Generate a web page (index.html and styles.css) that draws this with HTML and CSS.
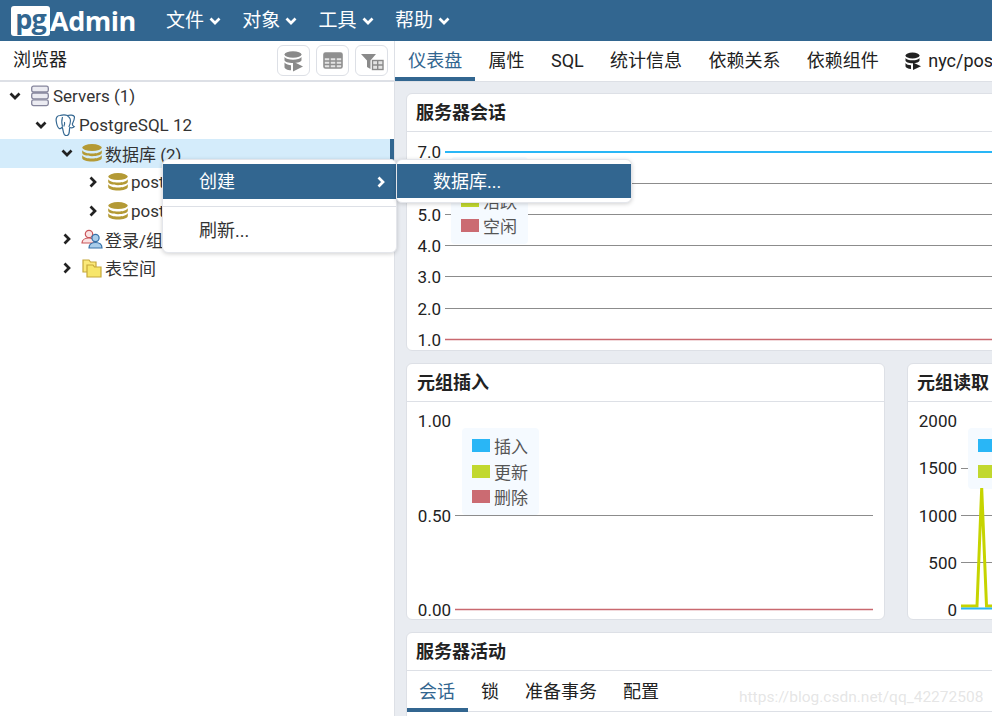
FILE: index.html
```html
<!DOCTYPE html>
<html lang="zh">
<head>
<meta charset="utf-8">
<title>pgAdmin</title>
<link rel="stylesheet" href="styles.css">
</head>
<body>
<svg class="defs" width="0" height="0">
  <defs>
    <symbol id="db" viewBox="0 0 20 18">
      <ellipse cx="10" cy="3.600" rx="9.800" ry="3.500" fill="#b49a35"/>
      <path d="M.2 6.300c1.500 2.400 5.300 3.300 9.800 3.300s8.300-.9 9.800-3.300v2.500c0 2-4.500 3.400-9.800 3.400S.2 10.800.2 8.800z" fill="#b49a35"/>
      <path d="M.2 11.300c1.500 2.400 5.300 3.300 9.800 3.300s8.300-.9 9.800-3.300v2.700c0 2-4.500 3.500-9.800 3.500S.2 16 .2 14z" fill="#b49a35"/>
    </symbol>
    <symbol id="down" viewBox="0 0 12 10"><path d="M1.500 2.500 6 7l4.500-4.500" fill="none" stroke="currentColor" stroke-width="2.700"/></symbol>
    <symbol id="right" viewBox="0 0 10 12"><path d="M2.500 1.500 7 6l-4.500 4.500" fill="none" stroke="currentColor" stroke-width="2.700"/></symbol>
  </defs>
</svg>
<div class="app">
  <header class="topbar">
    <div class="logo"><span class="logo-pg">pg</span><span class="logo-admin">Admin</span></div>
    <nav class="menu">
      <span class="menu-item">文件<svg class="menu-chev"><use href="#down"/></svg></span>
      <span class="menu-item">对象<svg class="menu-chev"><use href="#down"/></svg></span>
      <span class="menu-item">工具<svg class="menu-chev"><use href="#down"/></svg></span>
      <span class="menu-item">帮助<svg class="menu-chev"><use href="#down"/></svg></span>
    </nav>
  </header>
  <div class="main">
    <aside class="sidebar">
      <div class="side-head">
        <span class="side-title">浏览器</span>
        <div class="tools">
          <button class="tool" type="button">
            <svg width="22" height="22" viewBox="0 0 22 22">
              <ellipse cx="10" cy="4.500" rx="8.500" ry="3.300" fill="#8a8a8a"/>
              <path d="M1.500 7c1.500 2 4.500 2.700 8.500 2.700S17 9 18.500 7v3c0 1.800-3.800 3-8.500 3s-8.500-1.200-8.500-3zM1.500 12.500c1.500 2 4.500 2.700 6.500 2.700v5c-3.700-.2-6.500-1.400-6.500-3z" fill="#8a8a8a"/>
              <path d="M10 11.500l10 5-10 5z" fill="#8a8a8a"/>
            </svg>
          </button>
          <button class="tool" type="button">
            <svg width="20" height="18" viewBox="0 0 20 18">
              <rect x="1" y="1" width="18" height="15" rx="1.500" fill="#e4e4e4" stroke="#8f8f8f" stroke-width="1.600"/>
              <path d="M1 5.500h18M1 9h18M1 12.500h18M7 4v12M13 4v12" stroke="#8f8f8f" stroke-width="1.500"/>
              <rect x="1" y="1" width="18" height="4" fill="#8f8f8f"/>
            </svg>
          </button>
          <button class="tool" type="button">
            <svg width="24" height="20" viewBox="0 0 24 20">
              <path d="M1 3h15l-5.500 6.500V18L7 16V9.500z" fill="#8a8a8a"/>
              <rect x="12.500" y="9.500" width="10.500" height="9" fill="#e4e4e4" stroke="#8a8a8a" stroke-width="1.400"/>
              <path d="M12.500 14h10.500M17.700 9.500v9" stroke="#8a8a8a" stroke-width="1.400"/>
            </svg>
          </button>
        </div>
      </div>
      <div class="tree">
        <div class="row l0">
          <svg class="chev"><use href="#down"/></svg>
          <svg class="icon icon-server" viewBox="0 0 20 22">
            <g fill="#ececf2" stroke="#85859c" stroke-width="1.300">
              <rect x="1.700" y="1.200" width="16.600" height="5.800" rx="1.800"/>
              <rect x="1.700" y="8" width="16.600" height="5.800" rx="1.800"/>
              <rect x="1.700" y="14.800" width="16.600" height="5.800" rx="1.800"/>
            </g>
          </svg>
          <span>Servers (1)</span>
        </div>
        <div class="row l1">
          <svg class="chev"><use href="#down"/></svg>
          <svg class="icon icon-wide" viewBox="0 0 22 22">
            <path d="M5 1.500C2 1.500 .8 4 1.200 7c.4 2.800 1.500 6.500 3 7.500 1.200.8 2.200-.5 3-1.500.5 1.500 1 4 1.300 5.500.4 2 1.800 3.300 3.500 3 1.700-.3 2.200-2 2.300-4 .1-1.200.2-2.800.5-4 1.500.5 3.500.3 4.500-.8-1-.5-2-1.200-2-2.700 1-2 2.700-5 2-7.500C18.500 1 15 .7 12.500 1.500c-2.500-1-5-.8-7.500 0z" fill="#fff" stroke="#336791" stroke-width="1.200"/>
            <path d="M7.500 3c-.8 3-1.300 6 0 9.500M12.500 2c3 1.500 3.500 4.500 2.500 8-.3 1-1 1.800-1 3M9.500 8c.5 1.500 0 3-.7 4.500" fill="none" stroke="#336791" stroke-width="1.100"/>
          </svg>
          <span>PostgreSQL 12</span>
        </div>
        <div class="row l2 selected">
          <svg class="chev"><use href="#down"/></svg>
          <svg class="icon"><use href="#db"/></svg>
          <span>数据库 (2)</span>
        </div>
        <div class="row l3">
          <svg class="chev"><use href="#right"/></svg>
          <svg class="icon"><use href="#db"/></svg>
          <span>postgres</span>
        </div>
        <div class="row l3">
          <svg class="chev"><use href="#right"/></svg>
          <svg class="icon"><use href="#db"/></svg>
          <span>postgres</span>
        </div>
        <div class="row l2">
          <svg class="chev"><use href="#right"/></svg>
          <svg class="icon icon-wide" viewBox="0 0 22 20">
            <circle cx="8" cy="5" r="3.700" fill="#fbe3e3" stroke="#c9565b" stroke-width="1.200"/>
            <path d="M1 14c0-3 3-5 7-5 2 0 4 .6 5 2v3z" fill="#fbe3e3" stroke="#c9565b" stroke-width="1.200"/>
            <circle cx="14.500" cy="9" r="3.600" fill="#a9cdea" stroke="#3570a8" stroke-width="1.200"/>
            <path d="M8 19c0-3.500 2.500-5.500 6.500-5.500s6.500 2 6.500 5.500z" fill="#a9cdea" stroke="#3570a8" stroke-width="1.200"/>
          </svg>
          <span>登录/组角色</span>
        </div>
        <div class="row l2">
          <svg class="chev"><use href="#right"/></svg>
          <svg class="icon" viewBox="0 0 20 20">
            <path d="M1 2h6l1.500 2H14v10H1z" fill="#fbe97a" stroke="#c6a83a" stroke-width="1.200"/>
            <path d="M5 7h6l1.500 2H19v10H5z" fill="#f7e66a" stroke="#c6a83a" stroke-width="1.200"/>
          </svg>
          <span>表空间</span>
        </div>
      </div>
    </aside>
    <section class="content">
      <div class="tabs">
        <span class="tab active">仪表盘</span>
        <span class="tab">属性</span>
        <span class="tab">SQL</span>
        <span class="tab">统计信息</span>
        <span class="tab">依赖关系</span>
        <span class="tab">依赖组件</span>
        <span class="tab tab-query">
          <svg width="17" height="18" viewBox="0 0 17 18">
            <ellipse cx="7.500" cy="3.500" rx="7" ry="3" fill="#222"/>
            <path d="M.5 6c1 1.600 3.500 2.300 7 2.300s6-.7 7-2.300v2.500c0 1.600-3.100 2.700-7 2.700s-7-1.100-7-2.700zM.5 11c1 1.500 3 2.200 5.500 2.300V17C3 16.800.5 15.800.5 14.300z" fill="#222"/>
            <path d="M8 10.500l8 3.700-8 3.700z" fill="#222"/>
          </svg>nyc/postgres@PostgreSQL 12
        </span>
      </div>
      <div class="dash">
        <div class="panel panel-wide panel-sessions">
          <h3 class="panel-title">服务器会话</h3>
          <div class="panel-body">
            <svg class="chart chart-wide" viewBox="407 132 979 218">
              <g class="grid">
                <path d="M445 183.500H1387M445 214.500H1387M445 245.500H1387M445 276.500H1387M445 308.500H1387"/>
              </g>
              <path class="line-blue" d="M445 152H1387"/>
              <path class="line-red" d="M445 339.500H1387"/>
              <g class="axis">
                <text x="441" y="158">7.0</text>
                <text x="441" y="189">6.0</text>
                <text x="441" y="221">5.0</text>
                <text x="441" y="252">4.0</text>
                <text x="441" y="283">3.0</text>
                <text x="441" y="315">2.0</text>
                <text x="441" y="346">1.0</text>
              </g>
            </svg>
            <div class="legend legend-sessions">
              <div class="legend-row"><i class="swatch s-blue"></i>总计</div>
              <div class="legend-row"><i class="swatch s-lime"></i>活跃</div>
              <div class="legend-row"><i class="swatch s-red"></i>空闲</div>
            </div>
          </div>
        </div>
        <div class="panel panel-chart panel-left">
          <h3 class="panel-title">元组插入</h3>
          <div class="panel-body">
            <svg class="chart chart-half" viewBox="407 402 477 217">
              <path class="gridline" d="M455 515.500H873"/>
              <path class="line-red" d="M455 609.500H873"/>
              <g class="axis">
                <text x="451" y="427">1.00</text>
                <text x="451" y="522">0.50</text>
                <text x="451" y="616">0.00</text>
              </g>
            </svg>
            <div class="legend legend-insert">
              <div class="legend-row"><i class="swatch s-blue"></i>插入</div>
              <div class="legend-row"><i class="swatch s-lime"></i>更新</div>
              <div class="legend-row"><i class="swatch s-red"></i>删除</div>
            </div>
          </div>
        </div>
        <div class="panel panel-chart">
          <h3 class="panel-title">元组读取</h3>
          <div class="panel-body">
            <svg class="chart chart-half" viewBox="908 402 477 217">
              <path class="gridline" d="M961 468.500H1385M961 515.500H1385M961 562.500H1385"/>
              <g class="axis">
                <text x="957" y="427">2000</text>
                <text x="957" y="474">1500</text>
                <text x="957" y="522">1000</text>
                <text x="957" y="569">500</text>
                <text x="957" y="616">0</text>
              </g>
            </svg>
            <div class="legend legend-read">
              <div class="legend-row"><i class="swatch s-blue"></i>获取</div>
              <div class="legend-row"><i class="swatch s-lime"></i>返回</div>
            </div>
            <svg class="chart chart-half chart-over" viewBox="908 402 477 217">
              <path class="line-lime" d="M961 606H977L981.700 488L986.500 606H1385"/>
              <path class="line-blue" d="M961 608.500H1385"/>
            </svg>
          </div>
        </div>
        <div class="panel panel-wide panel-activity">
          <h3 class="panel-title">服务器活动</h3>
          <div class="subtabs">
            <span class="subtab active">会话</span>
            <span class="subtab">锁</span>
            <span class="subtab">准备事务</span>
            <span class="subtab">配置</span>
          </div>
        </div>
      </div>
    </section>
  </div>
  <div class="ctx ctx-main">
    <div class="ctx-item on">创建<svg class="ctx-chev"><use href="#right"/></svg></div>
    <div class="ctx-sep"></div>
    <div class="ctx-item">刷新...</div>
  </div>
  <div class="ctx ctx-sub">
    <div class="ctx-item on">数据库...</div>
  </div>
  <div class="watermark">https://blog.csdn.net/qq_42272508</div>
</div>
</body>
</html>
```
FILE: styles.css
```css
* { box-sizing: border-box; }
html, body { margin: 0; padding: 0; }
body {
  font-family: Roboto, "Noto Sans CJK SC", sans-serif;
  color: #222;
  background: #fff;
}
.defs { position: absolute; }
.app {
  position: relative;
  width: 992px;
  height: 716px;
  overflow: hidden;
  display: flex;
  flex-direction: column;
}

/* top bar */
.topbar {
  flex: none;
  height: 41px;
  background: #326690;
  display: flex;
  align-items: center;
  padding-left: 11px;
  color: #fff;
}
.logo {
  display: flex;
  align-items: center;
  width: 155px;
}
.logo-pg {
  width: 39px;
  height: 30px;
  background: #fff;
  color: #326690;
  border-radius: 3px;
  font: 700 27px/25px "Open Sans", sans-serif;
  letter-spacing: -1px;
  text-align: center;
}
.logo-admin {
  font: 700 27px/30px "Open Sans", sans-serif;
  letter-spacing: -.5px;
}
.menu { display: flex; gap: 10.300px; }
.menu-item {
  display: flex;
  align-items: center;
  font-size: 19px;
  line-height: 28px;
  width: 66px;
}
.menu-chev { width: 12px; height: 10px; margin-left: 5px; color: #fff; }

/* layout */
.main { flex: 1; display: flex; min-height: 0; }
.sidebar {
  flex: none;
  width: 395px;
  border-right: 1px solid #dde0e6;
}
.side-head {
  height: 41px;
  border-bottom: 2px solid #dde0e6;
  display: flex;
  align-items: center;
  justify-content: space-between;
  padding: 0 6px 0 13px;
}
.side-title { font-size: 18px; line-height: 24px; margin-bottom: 2px; }
.tools { display: flex; gap: 6px; }
.tool {
  width: 33px;
  height: 31px;
  padding: 0;
  border: 1px solid #dde0e6;
  border-radius: 6px;
  background: #fff;
  display: flex;
  align-items: center;
  justify-content: center;
}

/* tree */
.row {
  height: 28.600px;
  display: flex;
  align-items: center;
  font-size: 17px;
  color: #333;
  padding-left: 3px;
}
.row.l1 { padding-left: 29px; }
.row.l2 { padding-left: 55px; }
.row.l3 { padding-left: 81px; }
.row.selected { background: #d4ecfb; border-right: 4px solid #326690; }
.chev { width: 12px; height: 12px; margin: 0 6px; color: #222; flex: none; }
.icon { width: 20px; height: 20px; margin: 0 3px; flex: none; }
.icon-server { height: 22px; }
.icon-wide { width: 22px; height: 22px; margin: 0 2px; }

/* content */
.content {
  flex: none;
  width: 1000px;
  background: #e9ecf1;
  display: flex;
  flex-direction: column;
}
.tabs {
  flex: none;
  height: 41px;
  background: #fff;
  border-bottom: 1px solid #dde0e6;
  display: flex;
  white-space: nowrap;
}
.tab {
  font-size: 18px;
  line-height: 40px;
  padding: 0 13.200px;
  height: 40px;
}
.tab.active { color: #326690; border-bottom: 4px solid #326690; }
.tab-query { display: flex; align-items: center; gap: 6px; }
.dash {
  padding: 11px 0 0 11px;
  display: grid;
  grid-template-columns: 479px 479px;
  column-gap: 22px;
  row-gap: 12px;
  align-content: start;
}
.panel {
  background: #fff;
  border: 1px solid #dde0e6;
  border-radius: 6px;
  overflow: hidden;
}
.panel-wide { grid-column: 1 / 3; }
.panel-sessions { height: 258px; }
.panel-chart { height: 257px; }
.panel-activity { height: 100px; }
.panel-title {
  margin: 0;
  height: 38px;
  padding-left: 9px;
  font-size: 18px;
  line-height: 37px;
  font-weight: 700;
  color: #222;
  border-bottom: 1px solid #dde0e6;
}
.panel-left .panel-title { padding-left: 10px; }
.panel-body { position: relative; }
.chart { display: block; }
.chart-wide { width: 979px; height: 218px; }
.chart-half { width: 477px; height: 217px; }
.chart-over { position: absolute; left: 0; top: 0; }
.grid path, .gridline { stroke: #8c8c8c; stroke-width: 1; fill: none; }
.line-blue { stroke: #29b6f6; stroke-width: 2; fill: none; }
.line-red { stroke: #c9696f; stroke-width: 1.500; fill: none; }
.line-lime { stroke: #c6d400; stroke-width: 3; fill: none; }
.axis text { font-size: 17px; fill: #222; text-anchor: end; }

.legend {
  position: absolute;
  width: 77px;
  padding: 5px 0 5px 10px;
  background: #f5faff;
  border-radius: 4px;
  font-size: 17px;
  color: #555;
}
.legend-sessions { left: 44px; top: 25px; }
.legend-insert { left: 55px; top: 26px; }
.legend-read { left: 60px; top: 26px; }
.legend-row { height: 25.600px; display: flex; align-items: center; gap: 4px; white-space: nowrap; }
.swatch { width: 18px; height: 13px; flex: none; }
.s-blue { background: #29b6f6; }
.s-lime { background: #c1d82f; }
.s-red { background: #cb6b72; }

.subtabs {
  display: flex;
  height: 41px;
  margin-left: -1px;
  border-bottom: 1px solid #dde0e6;
}
.subtab {
  font-size: 18px;
  line-height: 41px;
  padding: 0 13px;
  height: 41px;
}
.subtab.active { color: #326690; border-bottom: 4px solid #326690; }

/* context menus */
.ctx {
  position: absolute;
  width: 235px;
  background: #fff;
  border: 1px solid #e4e6eb;
  border-radius: 6px;
  padding: 4px 0;
  box-shadow: 0 1px 4px rgba(0, 0, 0, .18);
  font-size: 18px;
  color: #333;
}
.ctx-main { left: 162px; top: 159px; height: 94px; }
.ctx-sub { left: 396px; top: 159px; height: 44px; width: 236px; }
.ctx-sub .ctx-item { height: 34px; }
.ctx-item {
  height: 35px;
  line-height: 35px;
  padding-left: 36px;
  display: flex;
  align-items: center;
}
.ctx-item.on { background: #326690; color: #fff; }
.ctx-chev { width: 10px; height: 12px; margin-left: auto; margin-right: 10px; color: #fff; }
.ctx-sep { height: 1px; margin: 7px 0 6px; background: #dde0e6; }
.watermark {
  position: absolute;
  left: 739px;
  top: 688px;
  font-size: 15.500px;
  color: rgba(190, 190, 190, .4);
}
```
